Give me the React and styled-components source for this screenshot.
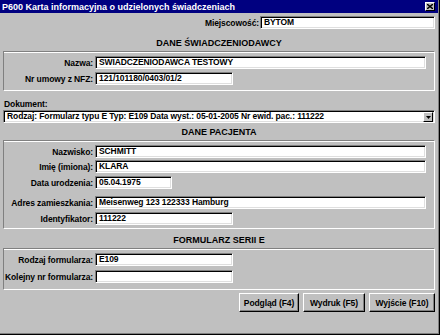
import styled, { createGlobalStyle } from "styled-components";

const GlobalStyle = createGlobalStyle`
  html, body {
    margin: 0;
    padding: 0;
    background: #c0c0c0;
  }
  body {
    font-family: "Liberation Sans", Arial, sans-serif;
  }
`;

const Window = styled.div`
  width: 440px;
  height: 335px;
  box-sizing: border-box;
  background: #c0c0c0;
  border-right: 1px solid #000;
  border-bottom: 1px solid #000;
  box-shadow: inset -1px -1px 0 #808080;
  display: flex;
  flex-direction: column;
  font-size: 8.5px;
  letter-spacing: -0.1px;
  font-weight: 700;
  color: #000;
`;

const TitleBar = styled.div`
  height: 13px;
  margin-right: 1px;
  padding: 0 3px 0 2px;
  background: #000080;
  color: #fff;
  font-size: 9px;
  letter-spacing: 0;
  display: flex;
  align-items: center;
  justify-content: space-between;
  white-space: nowrap;
`;

const CloseButton = styled.div`
  box-sizing: border-box;
  width: 10px;
  height: 9px;
  background: #c0c0c0;
  border-top: 1px solid #fff;
  border-left: 1px solid #fff;
  border-right: 1px solid #000;
  border-bottom: 1px solid #000;
  display: flex;
  align-items: center;
  justify-content: center;
`;

const Body = styled.div`
  flex: 1;
  padding: 0 4px 0 3px;
  display: flex;
  flex-direction: column;
`;

const TopRow = styled.div`
  margin-top: 3px;
  display: flex;
  justify-content: flex-end;
  align-items: center;
`;

const Label = styled.div`
  text-align: right;
  white-space: nowrap;
  padding-right: ${(p) => p.$pr || 0}px;
`;

const Field = styled.div`
  box-sizing: border-box;
  height: 13px;
  width: ${(p) => (p.$w ? `${p.$w}px` : "auto")};
  justify-self: ${(p) => (p.$w ? "start" : "stretch")};
  background: #fff;
  border-top: 1px solid #808080;
  border-left: 1px solid #808080;
  border-bottom: 1px solid #fff;
  border-right: 1px solid #fff;
  box-shadow: inset 1px 1px 0 #000, inset -1px -1px 0 #dfdfdf;
  padding-left: 3px;
  line-height: 11px;
  white-space: nowrap;
  overflow: hidden;
`;

const Heading = styled.div`
  height: 15px;
  line-height: 15px;
  margin-top: ${(p) => p.$mt}px;
  font-size: 9px;
  letter-spacing: 0;
  text-align: center;
  white-space: nowrap;
`;

const Frame = styled.div`
  box-sizing: border-box;
  border: 1px solid;
  border-color: #808080 #fff #fff #808080;
  box-shadow: inset 0 1px 0 #fff;
  padding: ${(p) => p.$pt}px 8px ${(p) => p.$pb}px 0;
  display: flex;
  flex-direction: column;
`;

const Row = styled.div`
  display: grid;
  grid-template-columns: 89px 1fr;
  column-gap: 2px;
  align-items: center;
  margin-top: ${(p) => p.$mt || 0}px;
`;

const DocLabel = styled.div`
  margin-top: 7px;
  height: 12px;
  line-height: 12px;
  padding-left: 1px;
`;

const Select = styled(Field)`
  display: flex;
  align-items: stretch;
  padding-left: 0;
`;

const SelectText = styled.div`
  flex: 1;
  padding-left: 3px;
  overflow: hidden;
`;

const ArrowButton = styled.div`
  box-sizing: border-box;
  width: 10px;
  margin: 1px 1px 0 0;
  background: #c0c0c0;
  border-top: 1px solid #fff;
  border-left: 1px solid #fff;
  border-right: 1px solid #000;
  border-bottom: 1px solid #000;
  display: flex;
  align-items: center;
  justify-content: center;
`;

const ButtonRow = styled.div`
  margin-top: 3px;
  display: flex;
  justify-content: flex-end;
  gap: 4px;
`;

const Button = styled.div`
  box-sizing: border-box;
  width: ${(p) => p.$w}px;
  height: 19px;
  background: #c0c0c0;
  border-top: 1px solid #fff;
  border-left: 1px solid #fff;
  border-right: 1px solid #000;
  border-bottom: 1px solid #000;
  box-shadow: inset -1px -1px 0 #808080;
  display: flex;
  align-items: center;
  justify-content: center;
  white-space: nowrap;
`;

function FormRow({ label, value, w, mt }) {
  return (
    <Row $mt={mt}>
      <Label>{label}</Label>
      <Field $w={w}>{value}</Field>
    </Row>
  );
}

export default function App() {
  return (
    <>
      <GlobalStyle />
      <Window>
        <TitleBar>
          <span>P600 Karta informacyjna o udzielonych świadczeniach</span>
          <CloseButton>
            <svg width="6" height="5" viewBox="0 0 6 5">
              <path d="M0 0 L6 5 M6 0 L0 5" stroke="#000" strokeWidth="1.4" />
            </svg>
          </CloseButton>
        </TitleBar>

        <Body>
          <TopRow>
            <Label $pr={1}>Miejscowość:</Label>
            <Field $w={175}>BYTOM</Field>
          </TopRow>

          <Heading $mt={7}>DANE ŚWIADCZENIODAWCY</Heading>
          <Frame $pt={4} $pb={5}>
            <FormRow label="Nazwa:" value="ŚWIADCZENIODAWCA TESTOWY" />
            <FormRow label="Nr umowy z NFZ:" value="121/101180/0403/01/2" w={138} mt={3} />
          </Frame>

          <DocLabel>Dokument:</DocLabel>
          <Select>
            <SelectText>
              Rodzaj: Formularz typu E Typ: E109 Data wyst.: 05-01-2005 Nr ewid. pac.: 111222
            </SelectText>
            <ArrowButton>
              <svg width="5" height="3" viewBox="0 0 5 3">
                <path d="M0 0 H5 L2.5 3 Z" fill="#000" />
              </svg>
            </ArrowButton>
          </Select>

          <Heading $mt={2}>DANE PACJENTA</Heading>
          <Frame $pt={4} $pb={3}>
            <FormRow label="Nazwisko:" value="SCHMITT" />
            <FormRow label="Imię (imiona):" value="KLARA" mt={2} />
            <FormRow label="Data urodzenia:" value="05.04.1975" w={77} mt={3} />
            <FormRow label="Adres zamieszkania:" value="Meisenweg 123 122333 Hamburg" mt={7} />
            <FormRow label="Identyfikator:" value="111222" w={138} mt={3} />
          </Frame>

          <Heading $mt={4}>FORMULARZ SERII E</Heading>
          <Frame $pt={4} $pb={6}>
            <FormRow label="Rodzaj formularza:" value="E109" w={138} />
            <FormRow label="Kolejny nr formularza:" value="" w={138} mt={4} />
          </Frame>

          <ButtonRow>
            <Button $w={60}>Podgląd (F4)</Button>
            <Button $w={62}>Wydruk (F5)</Button>
            <Button $w={66}>Wyjście (F10)</Button>
          </ButtonRow>
        </Body>
      </Window>
    </>
  );
}
